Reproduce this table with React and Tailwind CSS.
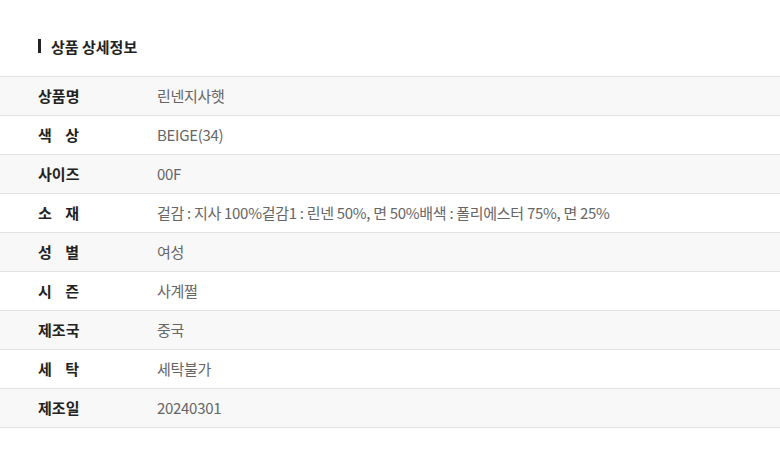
const rows = [
  ["상품명", "린넨지사햇"],
  ["색상", "BEIGE(34)"],
  ["사이즈", "00F"],
  ["소재", "겉감 : 지사 100%겉감1 : 린넨 50%, 면 50%배색 : 폴리에스터 75%, 면 25%"],
  ["성별", "여성"],
  ["시즌", "사계쩔"],
  ["제조국", "중국"],
  ["세탁", "세탁불가"],
  ["제조일", "20240301"],
];

function Label({ text }) {
  return (
    <span className="flex w-[41px] justify-between font-bold text-[#222]">
      {text.split("").map((c, i) => (
        <span key={i}>{c}</span>
      ))}
    </span>
  );
}

export default function App() {
  return (
    <div
      className="w-[780px] h-[466px] bg-white"
      style={{ fontFamily: '"Noto Sans CJK KR", "Noto Sans", sans-serif' }}
    >
      <div className="flex items-center gap-[10px] pl-[38px] pt-[35px] h-[76px] pb-[19px]">
        <span className="w-[3px] h-[14px] bg-[#222]" />
        <h3 className="text-[15px] font-bold text-[#222] leading-none">상품 상세정보</h3>
      </div>
      <div className="border-t border-[#e2e2e2]">
        {rows.map(([label, value], i) => (
          <div
            key={label}
            className={`flex items-center h-[39px] border-b border-[#e2e2e2] text-[15px] ${
              i % 2 === 0 ? "bg-[#f8f8f8]" : "bg-white"
            }`}
          >
            <div className="w-[157px] pl-[38px]">
              <Label text={label} />
            </div>
            <div className="text-[#666] tracking-[-0.3px]">{value}</div>
          </div>
        ))}
      </div>
    </div>
  );
}
